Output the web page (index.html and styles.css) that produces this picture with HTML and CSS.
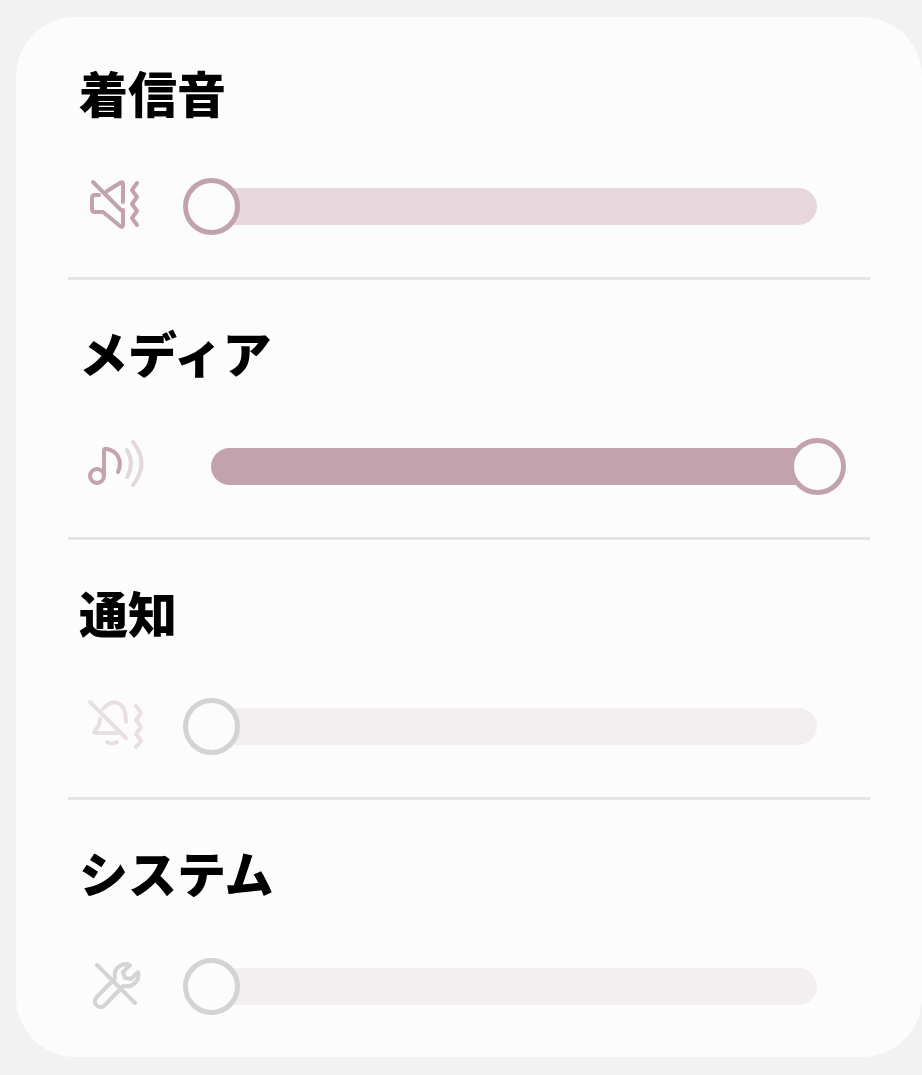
FILE: index.html
```html
<!DOCTYPE html>
<html lang="ja">

<head>
    <meta charset="UTF-8">
    <meta name="viewport" content="width=device-width, initial-scale=1.0">
    <title>音量</title>
    <link rel="stylesheet" href="styles.css">
</head>

<body>
    <div class="volume-card">
        <section class="volume-item">
            <h2 class="volume-title">着信音</h2>
            <div class="volume-row">
                <svg class="volume-icon icon-accent" viewBox="0 0 64 58">
                    <path d="M9 5 L37 33" />
                    <path d="M15 18 H11 Q8 18 8 21 V32 Q8 35 11 35 H19 L36 49 Q39 51 39 48 V33" />
                    <path d="M23 14 L36 6 Q39 4 39 7 V25" />
                    <path d="M53 6 L48 13 L53 20 L48 27 L53 34 L48 41 L53 48" />
                </svg>
                <div class="slider slider-ringtone">
                    <span class="slider-thumb"></span>
                </div>
            </div>
        </section>
        <section class="volume-item">
            <h2 class="volume-title">メディア</h2>
            <div class="volume-row">
                <svg class="volume-icon icon-accent" viewBox="0 0 64 58">
                    <circle cx="13" cy="39" r="7" />
                    <path d="M20 38 V14 Q20 11 23 12 C33 14 39 23 34 35" />
                    <path class="icon-fade" d="M43 13 Q51 26 43 40" />
                    <path class="icon-fade" d="M49 5 Q66 26 49 48" />
                </svg>
                <div class="slider slider-media">
                    <span class="slider-thumb slider-thumb-end"></span>
                </div>
            </div>
        </section>
        <section class="volume-item">
            <h2 class="volume-title">通知</h2>
            <div class="volume-row">
                <svg class="volume-icon icon-pale" viewBox="0 0 64 58">
                    <path d="M6 5 L42 41" />
                    <path d="M19 12 Q28 1 37 8 Q42 12 42 25" />
                    <path d="M16 22 Q16 29 11 33 Q9 36 12 36 H33" />
                    <path d="M23 45 Q28 48 33 45" />
                    <path d="M52 9 L57 16 L52 23 L57 30 L52 37 L57 44 L52 50" />
                </svg>
                <div class="slider slider-off">
                    <span class="slider-thumb slider-thumb-off"></span>
                </div>
            </div>
        </section>
        <section class="volume-item">
            <h2 class="volume-title">システム</h2>
            <div class="volume-row">
                <svg class="volume-icon icon-grey" viewBox="0 0 64 58">
                    <path d="M13 8 L51 46" />
                    <path d="M12 41 L31 21 C29 11 38 5 46 8 L39 15 L41 21 L47 22 L54 15 C56 23 50 31 39 29 L20 49 C15 53 8 46 12 41 Z" />
                </svg>
                <div class="slider slider-off">
                    <span class="slider-thumb slider-thumb-off"></span>
                </div>
            </div>
        </section>
    </div>
</body>

</html>
```

FILE: styles.css
```css
body {
    margin: 0;
    background-color: #f2f2f2;
    font-family: "Noto Sans CJK JP", "Noto Sans", sans-serif;
}

.volume-card {
    margin: 17px 0 18px 16px;
    padding: 3px 52px 0;
    background-color: #fcfcfc;
    border-radius: 60px;
}

.volume-item {
    padding: 42px 0 42px;
    border-bottom: 3px solid #e4e4e4;
}

.volume-item:last-child {
    border-bottom: none;
}

.volume-title {
    margin: 0 0 55px 11px;
    font-size: 49px;
    font-weight: 900;
    line-height: 60px;
    color: #000;
}

.volume-row {
    display: flex;
    align-items: center;
    height: 58px;
}

.volume-icon {
    width: 64px;
    height: 58px;
    margin-left: 16px;
    fill: none;
    stroke-width: 4;
    stroke-linecap: round;
    stroke-linejoin: round;
}

.icon-accent {
    stroke: #c2a3ad;
}

.icon-fade {
    stroke: #e3d8db;
}

.icon-pale {
    stroke: #e8dfe2;
}

.icon-grey {
    stroke: #d4d4d4;
}

.slider {
    position: relative;
    width: 606px;
    height: 37px;
    margin-left: 63px;
    border-radius: 19px;
}

.slider-ringtone {
    background-color: #e5d7db;
}

.slider-media {
    background-color: #c2a3ad;
}

.slider-off {
    background-color: #f3eeef;
}

.slider-thumb {
    position: absolute;
    top: -10px;
    left: -28px;
    box-sizing: border-box;
    width: 57px;
    height: 57px;
    background-color: #fcfcfc;
    border: 5px solid #c2a3ad;
    border-radius: 50%;
}

.slider-thumb-end {
    left: auto;
    right: -29px;
}

.slider-thumb-off {
    border-color: #d3d3d3;
}
```
